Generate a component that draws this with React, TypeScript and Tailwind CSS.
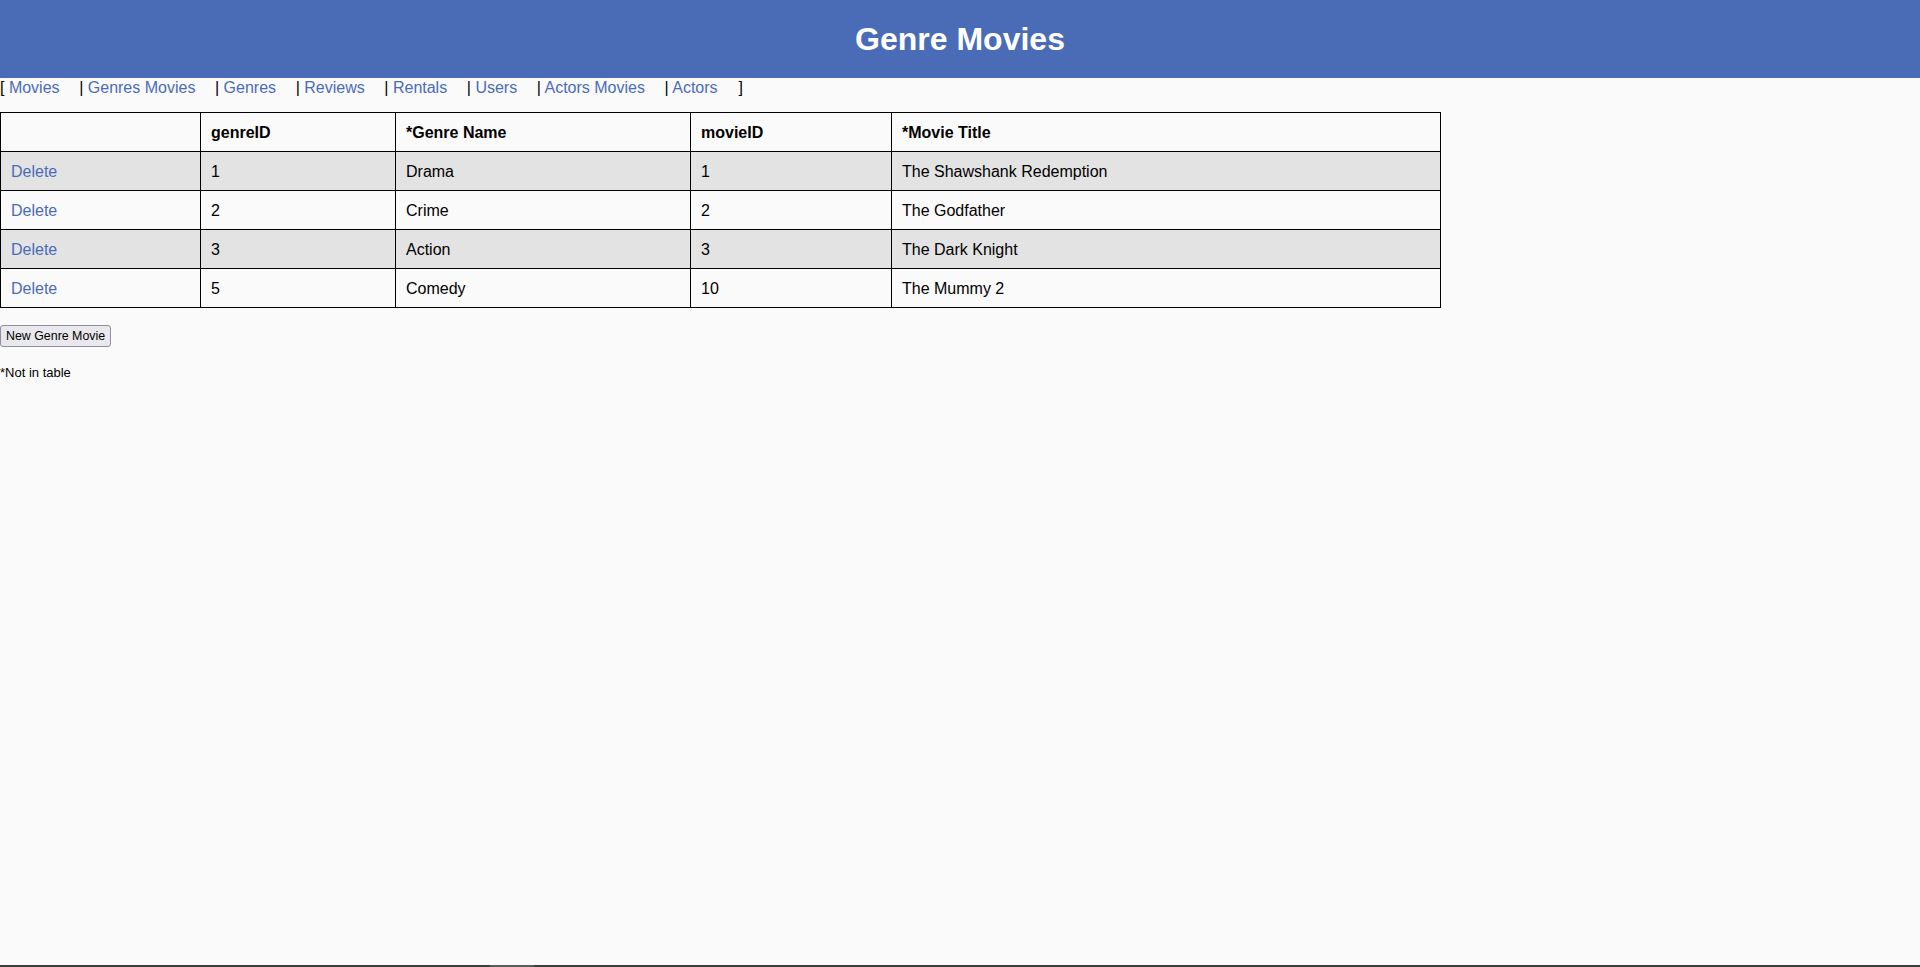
import React from "react";

const links = ["Movies", "Genres Movies", "Genres", "Reviews", "Rentals", "Users", "Actors Movies", "Actors"];

const rows = [
  { genreID: "1", genre: "Drama", movieID: "1", title: "The Shawshank Redemption" },
  { genreID: "2", genre: "Crime", movieID: "2", title: "The Godfather" },
  { genreID: "3", genre: "Action", movieID: "3", title: "The Dark Knight" },
  { genreID: "5", genre: "Comedy", movieID: "10", title: "The Mummy 2" },
];

export default function App() {
  return (
    <div
      className="min-h-[967px] flex flex-col bg-[#fafafa] text-black"
      style={{ fontFamily: '"Liberation Sans", Arial, sans-serif' }}
    >
      <header className="h-[78px] bg-[#4a6cb7] flex items-center justify-center">
        <h1 className="text-[32px] font-bold text-white leading-[37px]">Genre Movies</h1>
      </header>

      <nav className="text-[16px] leading-[19px] whitespace-pre">
        <span>[ </span>
        {links.map((l, i) => (
          <React.Fragment key={l}>
            {i > 0 && <span className="ml-[19.6px]">| </span>}
            <a href="#" className="text-[#4a6cb8]">{l}</a>
          </React.Fragment>
        ))}
        <span className="ml-[21px]">]</span>
      </nav>

      <table className="mt-[15px] w-[1440px] table-fixed border-collapse text-[16px] leading-[18px]">
        <colgroup>
          <col className="w-[200px]" />
          <col className="w-[195px]" />
          <col className="w-[295px]" />
          <col className="w-[201px]" />
          <col className="w-[549px]" />
        </colgroup>
        <thead>
          <tr>
            <th className="border border-black px-[10px] pt-[11px] pb-[9px] text-left font-bold"></th>
            <th className="border border-black px-[10px] pt-[11px] pb-[9px] text-left font-bold">genreID</th>
            <th className="border border-black px-[10px] pt-[11px] pb-[9px] text-left font-bold">*Genre Name</th>
            <th className="border border-black px-[10px] pt-[11px] pb-[9px] text-left font-bold">movieID</th>
            <th className="border border-black px-[10px] pt-[11px] pb-[9px] text-left font-bold">*Movie Title</th>
          </tr>
        </thead>
        <tbody>
          {rows.map((r, i) => (
            <tr key={r.genreID} className={i % 2 === 0 ? "bg-[#e3e3e3]" : "bg-[#fafafa]"}>
              <td className="border border-black px-[10px] pt-[11px] pb-[9px]">
                <a href="#" className="text-[#4a6cb8]">Delete</a>
              </td>
              <td className="border border-black px-[10px] pt-[11px] pb-[9px]">{r.genreID}</td>
              <td className="border border-black px-[10px] pt-[11px] pb-[9px]">{r.genre}</td>
              <td className="border border-black px-[10px] pt-[11px] pb-[9px]">{r.movieID}</td>
              <td className="border border-black px-[10px] pt-[11px] pb-[9px]">{r.title}</td>
            </tr>
          ))}
        </tbody>
      </table>

      <div className="mt-[15px]">
        <button className="h-[22px] px-[5px] text-[12.4px] leading-[14px] bg-[#e9e9ed] border border-[#8f8f9d] rounded-[3px] text-black">
          New Genre Movie
        </button>
      </div>

      <p className="mt-[18px] text-[13px] leading-[15px]">*Not in table</p>

      <div className="flex-1" />
      <div className="h-[2px] bg-[#3c3c3c] flex">
        <div className="ml-[490px] w-[44px] bg-[#5c5c5c]" />
      </div>
    </div>
  );
}
